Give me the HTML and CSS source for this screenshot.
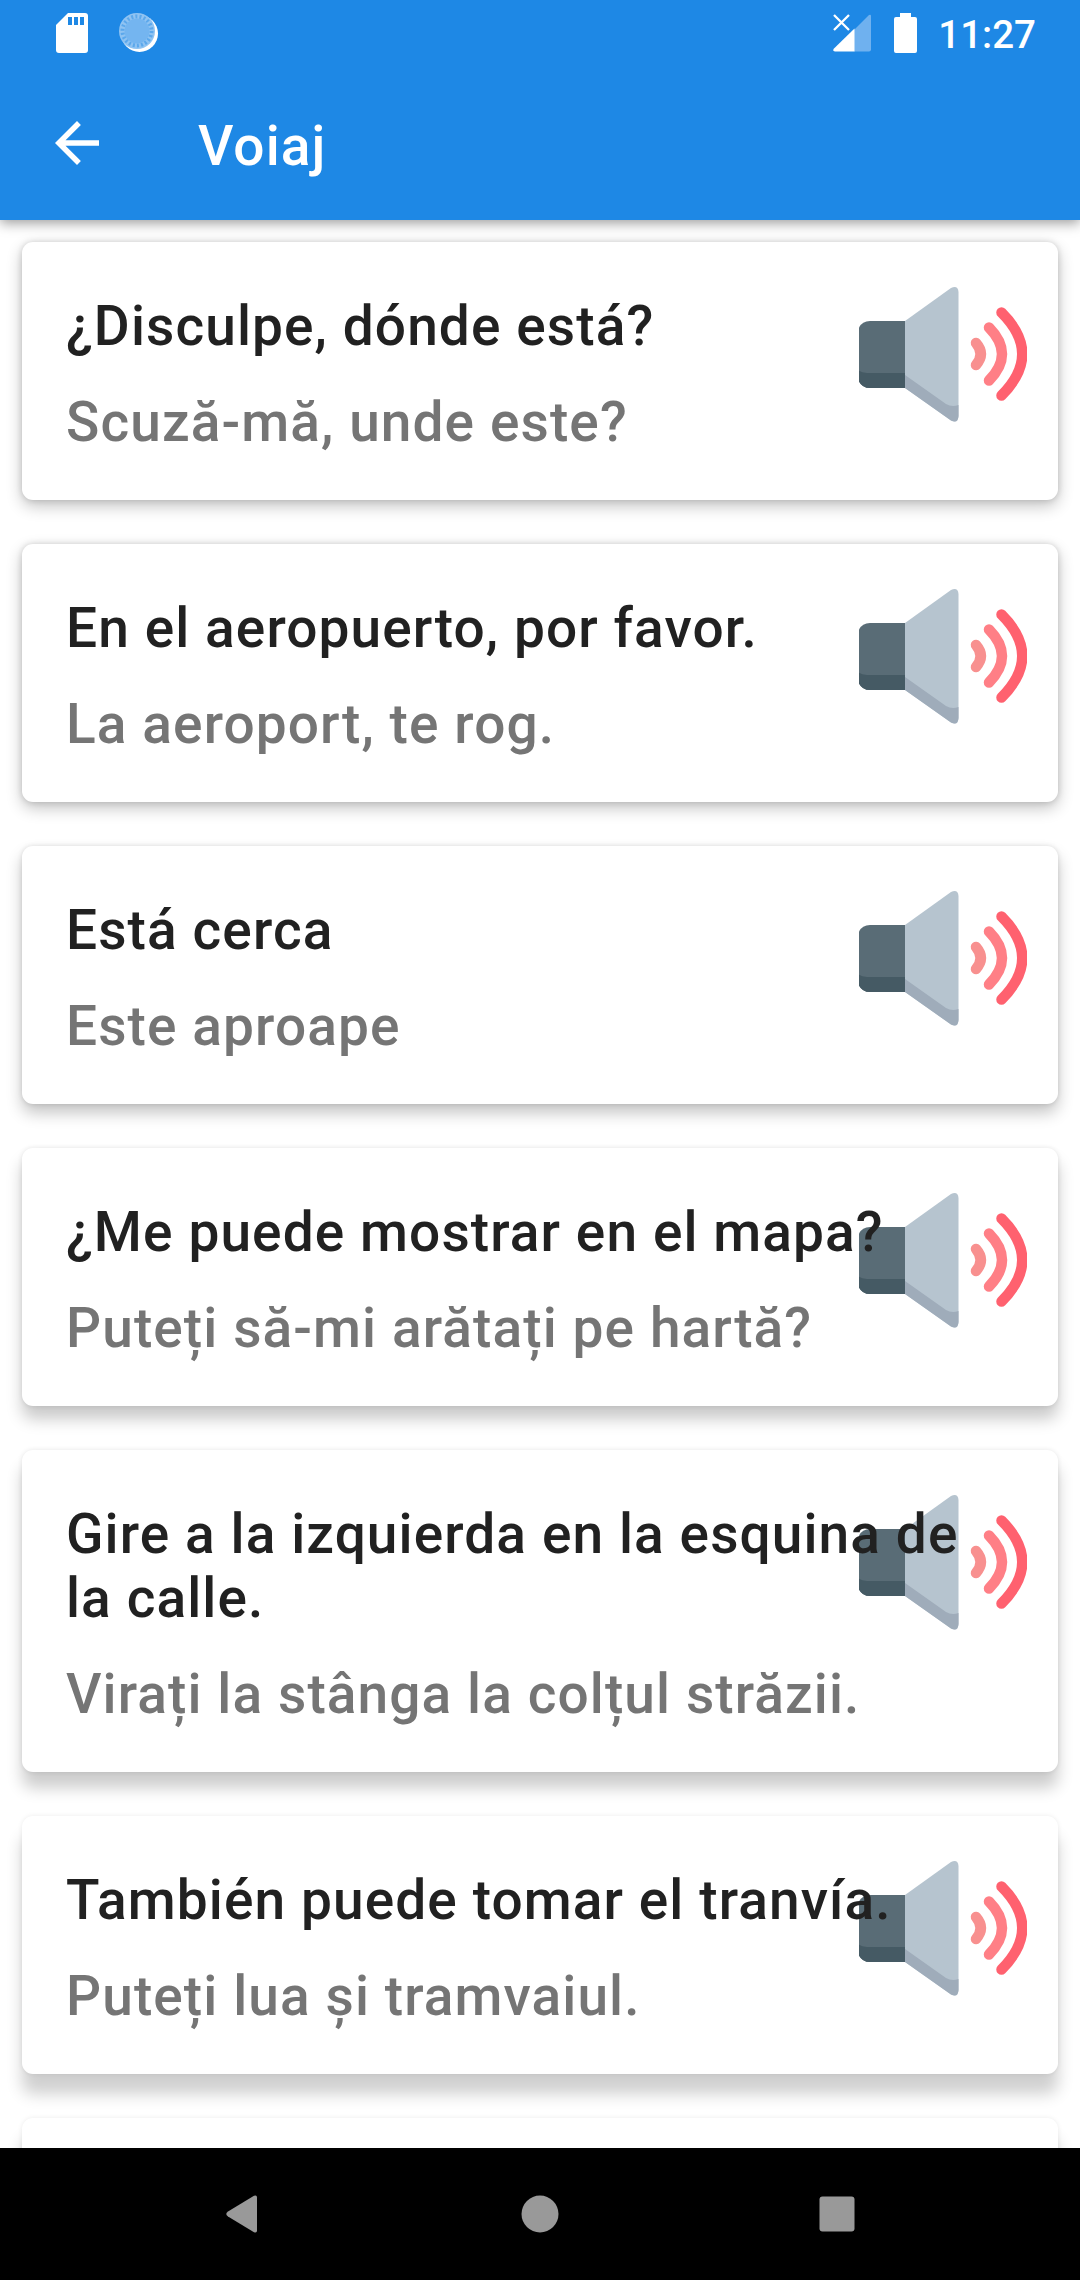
FILE: index.html
```html
<!DOCTYPE html>
<html lang="es">
<head>
    <meta charset="UTF-8">
    <meta name="viewport" content="width=device-width, initial-scale=1.0">
    <title>Voiaj</title>
    <link rel="stylesheet" href="styles.css">
</head>
<body>
    <!-- Speaker icon, reused in every card -->
    <svg class="sprite" width="0" height="0">
        <symbol id="speaker" viewBox="0 0 168 168">
            <path d="M-1 60 Q2 51 11 51 H47 V118 H11 Q2 118 -1 109 Z" fill="#596c76"/>
            <path d="M-1 100 Q2 103 8 103 H47 V118 H11 Q2 118 -1 109 Z" fill="#455a64"/>
            <path d="M46 51 L92 18 Q99 15 99.500 22 V146 Q99 154 92 150.500 L46 118 Z" fill="#b6c4cf"/>
            <path d="M46 105 L87 134 Q93 137.500 99.500 135 V146 Q99 154 92 150.500 L46 118 Z" fill="#9facba"/>
            <g fill="none" stroke-width="10.500" stroke-linecap="round">
                <path d="M117 73 Q126.500 84 117 95" stroke="#f8908f"/>
                <path d="M130 57.500 Q156 84 130 110.500" stroke="#ff7f86"/>
                <path d="M142.500 42.500 Q184 84 142.500 125.500" stroke="#ff616f"/>
            </g>
        </symbol>
    </svg>

    <div class="screen">
        <header>
            <div class="status-bar">
                <div class="status-left">
                    <svg width="32" height="40" viewBox="0 0 32 40">
                        <path d="M12 0 H29 Q32 0 32 3 V37 Q32 40 29 40 H3 Q0 40 0 37 V12 Z" fill="#fff"/>
                        <path d="M12 4 h4 v8 h-4z M18 4 h4 v8 h-4z M24 4 h4 v8 h-4z" fill="#1e88e5"/>
                    </svg>
                    <svg width="40" height="40" viewBox="0 0 40 40">
                        <circle cx="20.500" cy="20.500" r="18.500" fill="#fff"/>
                        <circle cx="18" cy="18" r="18" fill="#8fc3f2"/>
                        <circle cx="18" cy="18" r="14.500" fill="none" stroke="#5ba8ec" stroke-width="4" stroke-dasharray="2 2.140"/>
                        <circle cx="18" cy="18" r="12.500" fill="#74b5f0"/>
                    </svg>
                </div>
                <div class="status-right">
                    <svg width="38" height="38" viewBox="0 0 38 38">
                        <path d="M21 16 L36 1 Q38 0 38 2 V35.500 Q38 37.500 36 37.500 H21 Z" fill="#6fb1ef"/>
                        <path d="M21.500 14.500 V37.500 H2 Q-1 37 1 34.500 Z" fill="#fff"/>
                        <path d="M1 1 L16 16 M16 1 L1 16" stroke="#fff" stroke-width="2.300"/>
                    </svg>
                    <svg class="battery" width="23" height="40" viewBox="0 0 23 40">
                        <path d="M6 0 H17 V4 H21 Q23 4 23 6 V38 Q23 40 21 40 H2 Q0 40 0 38 V6 Q0 4 2 4 H6 Z" fill="#fff"/>
                    </svg>
                    <span class="clock">11:27</span>
                </div>
            </div>
            <div class="app-bar">
                <svg width="44" height="44" viewBox="4 4 16 16">
                    <path d="M20 11H7.830l5.590-5.590L12 4l-8 8 8 8 1.410-1.410L7.830 13H20v-2z" fill="#fff"/>
                </svg>
                <h1>Voiaj</h1>
            </div>
        </header>

        <main>
            <div class="card">
                <svg class="speaker"><use href="#speaker"/></svg>
                <h2>¿Disculpe, dónde está?</h2>
                <p>Scuză-mă, unde este?</p>
            </div>
            <div class="card">
                <svg class="speaker"><use href="#speaker"/></svg>
                <h2>En el aeropuerto, por favor.</h2>
                <p>La aeroport, te rog.</p>
            </div>
            <div class="card">
                <svg class="speaker"><use href="#speaker"/></svg>
                <h2>Está cerca</h2>
                <p>Este aproape</p>
            </div>
            <div class="card">
                <svg class="speaker"><use href="#speaker"/></svg>
                <h2>¿Me puede mostrar en el mapa?</h2>
                <p>Puteți să-mi arătați pe hartă?</p>
            </div>
            <div class="card">
                <svg class="speaker"><use href="#speaker"/></svg>
                <h2>Gire a la izquierda en la esquina de la calle.</h2>
                <p>Virați la stânga la colțul străzii.</p>
            </div>
            <div class="card">
                <svg class="speaker"><use href="#speaker"/></svg>
                <h2>También puede tomar el tranvía.</h2>
                <p>Puteți lua și tramvaiul.</p>
            </div>
            <div class="card"></div>
        </main>

        <nav>
            <svg width="38" height="38" viewBox="0 0 38 38">
                <path d="M4 16.500 L30 0.800 Q33 -0.500 33 2.500 V35.500 Q33 38.500 30 37.200 L4 21.500 Q0.500 19 4 16.500 Z" fill="#999"/>
            </svg>
            <svg width="38" height="38" viewBox="0 0 38 38">
                <circle cx="19" cy="19" r="18.500" fill="#999"/>
            </svg>
            <svg width="38" height="38" viewBox="0 0 38 38">
                <rect x="1.500" y="1.500" width="35" height="35" rx="3" fill="#999"/>
            </svg>
        </nav>
    </div>
</body>
</html>
```
FILE: styles.css
```css
* {
    box-sizing: border-box;
}
body {
    margin: 0;
    font-family: Roboto, sans-serif;
    background-color: #fff;
    color: #212121;
}
svg {
    display: block;
    flex: none;
}
.sprite {
    position: absolute;
}
.screen {
    display: flex;
    flex-direction: column;
    width: 1080px;
    height: 2280px;
    overflow: hidden;
}
header {
    flex: none;
    height: 220px;
    background-color: #1e88e5;
    color: #fff;
    box-shadow: 0 3px 12px rgba(0, 0, 0, 0.4);
}
.status-bar {
    display: flex;
    justify-content: space-between;
    height: 66px;
    padding: 13px 44px 0 56px;
}
.status-left {
    display: flex;
    gap: 31px;
}
.status-right {
    display: flex;
    align-items: flex-start;
}
.status-right svg:first-child {
    margin: 1px 23px 0 0;
}
.battery {
    margin-right: 21px;
}
.clock {
    font-size: 38.500px;
    font-weight: 500;
    line-height: 44px;
}
.app-bar {
    display: flex;
    align-items: center;
    gap: 99px;
    height: 154px;
    padding: 0 55px;
}
h1, h2, p {
    margin: 0;
    font-size: 55px;
    font-weight: 500;
    line-height: 64px;
    letter-spacing: 1.100px;
}
h1 {
    padding-top: 6px;
}
main {
    flex: 1;
    min-height: 0;
    display: flex;
    flex-direction: column;
    gap: 44px;
    padding: 22px 22px 0;
    overflow: hidden;
}
.card {
    position: relative;
    flex: none;
    min-height: 258px;
    padding: 52px 44px 46px;
    background-color: #fff;
    border-radius: 11px;
    box-shadow: 0 6px 16px rgba(0, 0, 0, 0.24), 0 0 6px rgba(0, 0, 0, 0.15);
}
.card h2,
.card p {
    position: relative;
}
.card p {
    margin-top: 32px;
    color: #757575;
}
/* the speaker sits behind long phrases */
.speaker {
    position: absolute;
    top: 28px;
    right: 31px;
    width: 168px;
    height: 168px;
}
/* shadows get longer further down the screen */
.card:nth-child(3) {
    box-shadow: 0 9px 16px rgba(0, 0, 0, 0.23), 0 0 5px rgba(0, 0, 0, 0.12);
}
.card:nth-child(4) {
    box-shadow: 0 13px 16px rgba(0, 0, 0, 0.21), 0 0 5px rgba(0, 0, 0, 0.1);
}
.card:nth-child(5) {
    box-shadow: 0 16px 16px rgba(0, 0, 0, 0.2), 0 0 5px rgba(0, 0, 0, 0.1);
}
.card:nth-child(n+6) {
    box-shadow: 0 20px 16px rgba(0, 0, 0, 0.19), 0 0 5px rgba(0, 0, 0, 0.08);
}
nav {
    flex: none;
    display: flex;
    justify-content: space-between;
    height: 132px;
    padding: 47px 224px 0;
    background-color: #000;
}
```
